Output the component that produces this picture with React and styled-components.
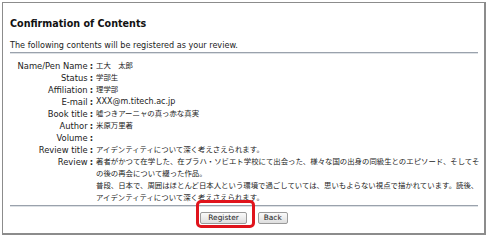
import React from "react";
import styled, { createGlobalStyle } from "styled-components";

const Global = createGlobalStyle`
  html, body {
    margin: 0;
    padding: 0;
    background: #fff;
  }
  body {
    font-family: "DejaVu Sans", "Noto Sans CJK JP", sans-serif;
    color: #222;
  }
`;

const Frame = styled.div`
  margin: 2px 0 0 2px;
  width: 484px;
  height: 233px;
  box-sizing: border-box;
  border: 1px solid #8c8c8c;
  border-right: 2px solid #8c8c8c;
  border-bottom: 2px solid #8c8c8c;
  padding: 0 6px 0 7px;
  background: #fff;
`;

const Title = styled.h1`
  margin: 0;
  padding-top: 15px;
  font-size: 9.6px;
  line-height: 12px;
  font-weight: bold;
  color: #111;
`;

const Intro = styled.p`
  margin: 9px 0 0;
  font-size: 8.1px;
  line-height: 12px;
`;

const Rule = styled.hr`
  margin: 1px 0 0;
  border: 0;
  border-top: 1px solid #9aa2ac;
  border-bottom: 1px solid #dde1e5;
  height: 0;
`;

const Rows = styled.dl`
  margin: 6px 0 0;
  display: grid;
  grid-template-columns: 83px 390px;
  font-size: 8.4px;
  line-height: 12px;
`;

const Label = styled.dt`
  text-align: right;
  white-space: nowrap;
  &::after {
    content: ":";
    font-weight: bold;
    margin-left: 2px;
  }
`;

const Value = styled.dd`
  margin: 0 0 0 3px;
  font-size: ${(p) => (p.$jp ? "7.4px" : "8px")};
  line-break: strict;
`;

const Buttons = styled.div`
  display: flex;
  justify-content: center;
  gap: 11px;
  margin-top: 5px;
`;

const Hold = styled.span`
  position: relative;
  display: inline-flex;
`;

const Mark = styled.span`
  position: absolute;
  left: -4px;
  top: -12px;
  right: -8px;
  bottom: -4px;
  border: 3px solid #e0141c;
  border-radius: 5px;
  pointer-events: none;
`;

const Button = styled.button`
  font-family: "DejaVu Sans", sans-serif;
  font-size: 7.4px;
  line-height: 10px;
  color: #222;
  height: 12px;
  padding: 0 ${(p) => p.$pad || 5}px;
  border: 1px solid #9a9a9a;
  border-radius: 2px;
  background: linear-gradient(#fafafa, #dedede);
`;

const rows = [
  ["Name/Pen Name", "工大　太郎"],
  ["Status", "学部生"],
  ["Affiliation", "理学部"],
  ["E-mail", "XXX@m.titech.ac.jp", false],
  ["Book title", "嘘つきアーニャの真っ赤な真実"],
  ["Author", "米原万里著"],
  ["Volume", ""],
  ["Review title", "アイデンティティについて深く考えさえられます。"],
];

export default function App() {
  return (
    <>
      <Global />
      <Frame>
        <Title>Confirmation of Contents</Title>
        <Intro>The following contents will be registered as your review.</Intro>
        <Rule />
        <Rows>
          {rows.map(([k, v, jp]) => (
            <React.Fragment key={k}>
              <Label>{k}</Label>
              <Value $jp={jp !== false}>{v}</Value>
            </React.Fragment>
          ))}
          <Label>Review</Label>
          <Value $jp>
            著者がかつて在学した、在プラハ・ソビエト学校にて出会った、様々な国の出身の同級生とのエピソード、そしてその後の再会について綴った作品。
            <br />
            普段、日本で、周囲はほとんど日本人という環境で過ごしていては、思いもよらない視点で描かれています。読後、アイデンティティについて深く考えさえられます。
          </Value>
        </Rows>
        <Rule />
        <Buttons>
          <Hold>
            <Button $pad={7}>Register</Button>
            <Mark />
          </Hold>
          <Button $pad={5}>Back</Button>
        </Buttons>
      </Frame>
    </>
  );
}
